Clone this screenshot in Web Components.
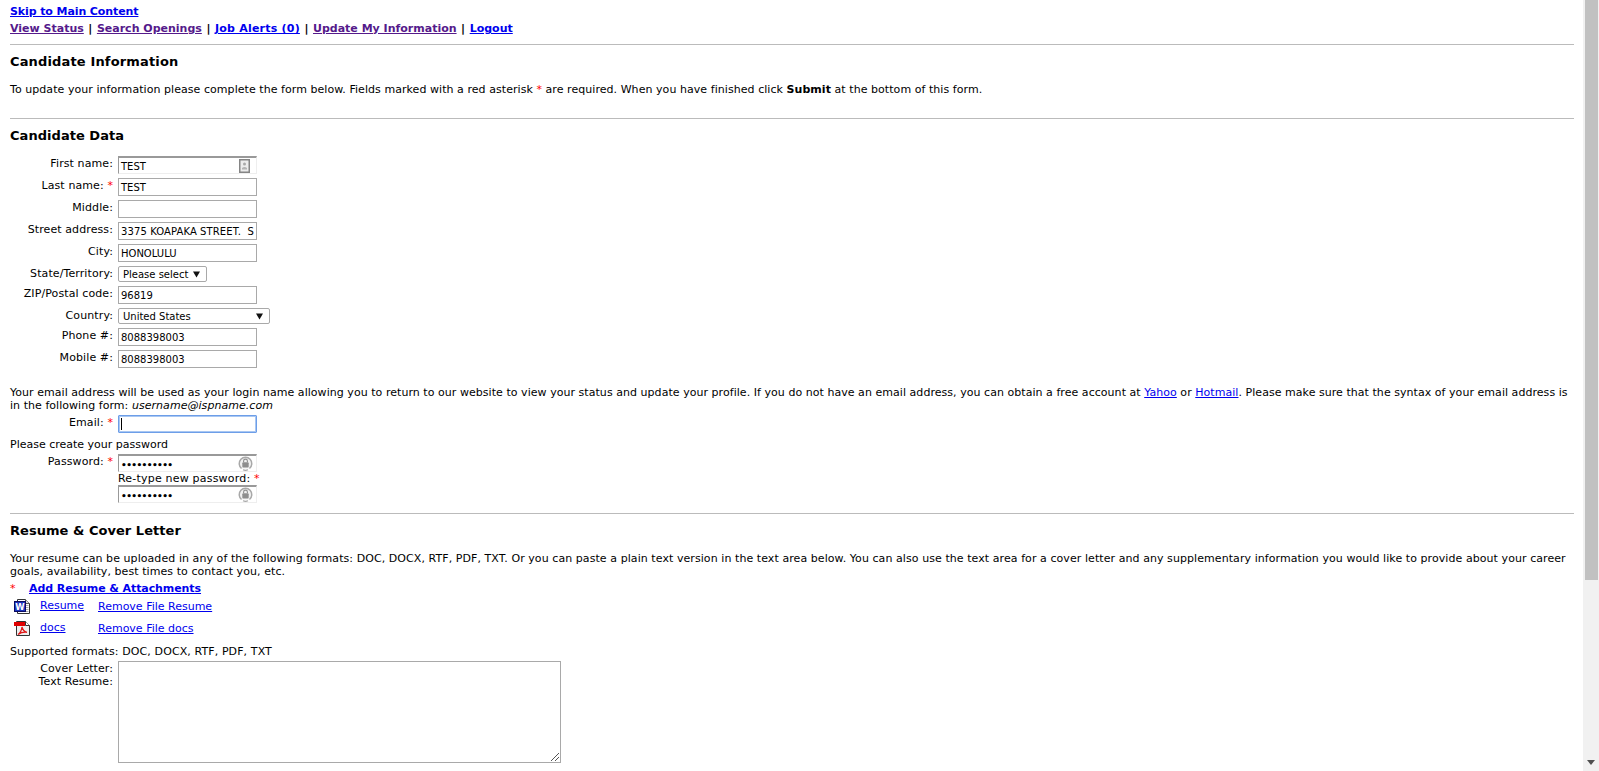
<!DOCTYPE html>
<html lang="en">
<head>
<meta charset="utf-8">
<title>Candidate Information</title>
<style>
  html, body { margin: 0; height: 100%; overflow: hidden; background: #fff; }
  body { font: 11px/13px "DejaVu Sans", Verdana, sans-serif; color: #000; letter-spacing: .07px; }
</style>
</head>
<body>
<cand-page>
  <cand-nav></cand-nav>

  <cand-section heading="Candidate Information" gap="14" space="8" track=".15">
    <cand-text track=".055">To update your information please complete the form below. Fields marked with a red asterisk <cand-req></cand-req> are required. When you have finished click <b>Submit</b> at the bottom of this form.</cand-text>
  </cand-section>

  <cand-section heading="Candidate Data" gap="13" space="22">
    <cand-row label="First name:" h="22"><cand-input value="TEST" kind="card"></cand-input></cand-row>
    <cand-row label="Last name:" required h="22"><cand-input value="TEST"></cand-input></cand-row>
    <cand-row label="Middle:" h="22"><cand-input></cand-input></cand-row>
    <cand-row label="Street address:" h="22"><cand-input value="3375 KOAPAKA STREET.  S" track=".1"></cand-input></cand-row>
    <cand-row label="City:" h="22"><cand-input value="HONOLULU"></cand-input></cand-row>
    <cand-row label="State/Territory:" h="20"><cand-select value="Please select" w="89"></cand-select></cand-row>
    <cand-row label="ZIP/Postal code:" h="22"><cand-input value="96819"></cand-input></cand-row>
    <cand-row label="Country:" h="20"><cand-select value="United States" w="152"></cand-select></cand-row>
    <cand-row label="Phone #:" h="22"><cand-input value="8088398003"></cand-input></cand-row>
    <cand-row label="Mobile #:" h="22"><cand-input value="8088398003"></cand-input></cand-row>

    <cand-text top="14" track=".045">Your email address will be used as your login name allowing you to return to our website to view your status and update your profile. If you do not have an email address, you can obtain a free account at <cand-link>Yahoo</cand-link> or <cand-link>Hotmail</cand-link>. Please make sure that the syntax of your email address is in the following form: <i>username@ispname.com</i></cand-text>
    <cand-row label="Email:" required h="22" top="3"><cand-input kind="focus"></cand-input></cand-row>
    <cand-text top="1" track="0">Please create your password</cand-text>
    <cand-row label="Password:" required h="22" top="3">
      <cand-input value="••••••••••" kind="key"></cand-input>
    </cand-row>
    <cand-row h="31">
      <div style="line-height:13px;margin-top:-4px;letter-spacing:.2px">Re-type new password: <cand-req></cand-req></div>
      <cand-input value="••••••••••" kind="key"></cand-input>
    </cand-row>
  </cand-section>

  <cand-section heading="Resume &amp; Cover Letter" gap="14" space="6">
    <cand-text>Your resume can be uploaded in any of the following formats: DOC, DOCX, RTF, PDF, TXT. Or you can paste a plain text version in the text area below. You can also use the text area for a cover letter and any supplementary information you would like to provide about your career goals, availability, best times to contact you, etc.</cand-text>
    <cand-add></cand-add>
    <cand-file name="Resume" type="word"></cand-file>
    <cand-file name="docs" type="pdf"></cand-file>
    <cand-text top="6" track=".1">Supported formats: DOC, DOCX, RTF, PDF, TXT</cand-text>
    <cand-letter></cand-letter>
  </cand-section>
</cand-page>

<script>
// small helper so every element gets an open shadow root from a string
function def(name, html, cls) {
  const C = cls || class extends HTMLElement {
    constructor() { super(); this.attachShadow({ mode: "open" }).innerHTML = html; }
  };
  customElements.define(name, C);
}

def("cand-page", `
  <style>
    :host { display: flex; height: 100vh; overflow: hidden; }
    main { flex: 1; min-width: 0; padding: 5px 9px 0 10px; height: 900px; }
    .bar { width: 16px; flex: none; background: #f1f1f1; position: relative; }
    .thumb { margin-left: 2px; width: 13px; height: 580px; background: #c1c1c1; }
    .down { position: absolute; left: 4px; bottom: 6px; width: 0; height: 0;
      border: 4px solid transparent; border-top: 5px solid #505050; border-bottom: 0; }
  </style>
  <main><slot></slot></main>
  <div class="bar"><div class="thumb"></div><div class="down"></div></div>
`);

const linkCss = `a { color: #00e; text-decoration: underline; cursor: pointer; } a.seen { color: #551a8b; }`;

class CandNav extends HTMLElement {
  constructor() {
    super();
    const items = [["View Status", "seen"], ["Search Openings", "seen"], ["Job Alerts (0)", "wide"], ["Update My Information", "seen"], ["Logout", ""]];
    this.attachShadow({ mode: "open" }).innerHTML = `
      <style>
        :host { display: block; font-weight: bold; line-height: 14px; letter-spacing: 0; }
        ${linkCss}
        .skip { letter-spacing: -.1px; }
        .wide { letter-spacing: .22px; }
        div { margin-top: 3px; }
        span { padding: 0 .7px; }
      </style>
      <a class="skip">Skip to Main Content</a>
      <div>${items.map(([t, cls]) => `<a class="${cls}">${t}</a>`).join(" <span>|</span> ")}</div>`;
  }
}
def("cand-nav", "", CandNav);

class CandSection extends HTMLElement {
  constructor() {
    super();
    this.attachShadow({ mode: "open" }).innerHTML = `
      <style>
        :host { display: block; }
        hr { border: 0; height: 1px; background: #bbb; margin: 0 0 9px; }
        h2 { font-size: 13px; line-height: 15px; margin: 0; font-weight: bold; letter-spacing: .04px; }
      </style>
      <hr><h2></h2><slot></slot>`;
    const h2 = this.shadowRoot.querySelector("h2");
    h2.textContent = this.getAttribute("heading");
    h2.style.marginBottom = this.getAttribute("gap") + "px";
    if (this.getAttribute("track")) h2.style.letterSpacing = this.getAttribute("track") + "px";
    this.shadowRoot.querySelector("hr").style.marginTop = (this.getAttribute("space") || 9) + "px";
  }
}
def("cand-section", "", CandSection);

class CandText extends HTMLElement {
  constructor() {
    super();
    this.attachShadow({ mode: "open" }).innerHTML = `<style>:host { display: block; }</style><slot></slot>`;
    this.style.marginTop = (this.getAttribute("top") || 0) + "px";
    if (this.getAttribute("track")) this.style.letterSpacing = this.getAttribute("track") + "px";
  }
}
def("cand-text", "", CandText);

def("cand-req", `<style>:host { color: #f00; }</style>*`);
def("cand-link", `<style>:host { color: #00e; text-decoration: underline; cursor: pointer; }</style><slot></slot>`);

class CandRow extends HTMLElement {
  constructor() {
    super();
    const label = this.getAttribute("label") || "";
    const req = this.hasAttribute("required");
    this.attachShadow({ mode: "open" }).innerHTML = `
      <style>
        :host { display: grid; grid-template-columns: 103px 1fr; column-gap: 5px; align-items: start; }
        .l { text-align: right; padding-top: 1px; white-space: pre; letter-spacing: .1px; }
        .r { color: #f00; }
        .c { min-width: 0; }
      </style>
      <div class="l">${label}${req ? ' <span class="r">*</span>' : ""}</div>
      <div class="c"><slot></slot></div>`;
    this.style.height = this.getAttribute("h") + "px";
    if (this.getAttribute("top")) this.style.marginTop = this.getAttribute("top") + "px";
  }
}
def("cand-row", "", CandRow);

const cardIcon = `<svg width="11" height="14" viewBox="0 0 11 14"><rect x=".75" y=".75" width="9.500" height="12.500" fill="#ececec" stroke="#858585" stroke-width="1.500"/><circle cx="5.500" cy="5" r="1.500" fill="#a8a8a8"/><path d="M3 10.500V9q2.500-2 5 0v1.500z" fill="#b4b4b4"/></svg>`;
const keyIcon = `<svg width="15" height="15" viewBox="0 0 15 15"><path d="M3.500 12.500A6.300 6.300 0 1 1 11.500 12.500" fill="#f0f0f0" stroke="#a8a8a8" stroke-width="1.500"/><path d="M5 13.800q2.500 1 5 0" fill="none" stroke="#a8a8a8" stroke-width="1.200"/><rect x="4.300" y="6.300" width="6.400" height="5.200" rx="1" fill="#8e8e8e"/><path d="M5.600 6.300V5a1.900 1.900 0 0 1 3.800 0v1.300" fill="none" stroke="#8e8e8e" stroke-width="1.100"/></svg>`;

class CandInput extends HTMLElement {
  constructor() {
    super();
    const kind = this.getAttribute("kind") || "";
    const v = this.getAttribute("value") || "";
    const inset = kind === "card" || kind === "key";
    this.attachShadow({ mode: "open" }).innerHTML = `
      <style>
        :host { display: block; width: 139px; height: 18px; box-sizing: border-box; position: relative;
          font-size: 10px; line-height: 14px; overflow: hidden; background: #fff; letter-spacing: 0; }
        .box { height: 100%; box-sizing: border-box; border: 1px solid #a9a9a9; padding: 2px 1px 0 2px; white-space: pre; overflow: hidden; }
        .inset { border-style: solid; border-width: 2px 1px 1px 1px; border-color: #999 #eee #eee #999; }
        .focus { border: 1px solid #6d9ee8; box-shadow: inset 0 0 0 1px #a9c7f2; border-radius: 1px; padding-top: 1px; }
        .caret { display: inline-block; width: 1px; height: 12px; background: #000; margin-top: 1px; }
        .dots { font-size: 9px; letter-spacing: -.6px; font-weight: bold; }
        .ico { position: absolute; right: 7px; top: 3px; display: flex; }
        .key { right: 4px; top: 2px; }
      </style>
      <div class="box ${inset ? "inset" : ""} ${kind === "focus" ? "focus" : ""}"><span class="${kind === "key" ? "dots" : ""}"></span>${kind === "focus" ? '<i class="caret"></i>' : ""}</div>
      ${kind === "card" ? `<div class="ico">${cardIcon}</div>` : ""}
      ${kind === "key" ? `<div class="ico key">${keyIcon}</div>` : ""}`;
    const span = this.shadowRoot.querySelector("span");
    span.textContent = v;
    if (this.getAttribute("track")) span.style.letterSpacing = this.getAttribute("track") + "px";
  }
}
def("cand-input", "", CandInput);

class CandSelect extends HTMLElement {
  constructor() {
    super();
    this.attachShadow({ mode: "open" }).innerHTML = `
      <style>
        :host { display: flex; align-items: center; justify-content: space-between; box-sizing: border-box; height: 16px;
          border: 1px solid #a9a9a9; border-radius: 2px; padding: 0 6px 0 4px; font-size: 10px; background: #fff; letter-spacing: 0; }
        svg { display: block; }
      </style>
      <span></span>
      <svg width="7" height="7" viewBox="0 0 7 7"><path d="M0 .5h7L3.500 6.500z" fill="#111"/></svg>`;
    this.shadowRoot.querySelector("span").textContent = this.getAttribute("value");
    this.style.width = this.getAttribute("w") + "px";
  }
}
def("cand-select", "", CandSelect);

def("cand-add", `
  <style>
    :host { display: flex; font-weight: bold; margin-top: 4px; letter-spacing: -.08px; }
    ${linkCss}
    .r { color: #f00; font-weight: normal; width: 19px; }
  </style>
  <span class="r">*</span><a>Add Resume &amp; Attachments</a>`);

const wordIcon = `<svg width="16" height="15" viewBox="0 0 16 15"><path d="M3.500.5h8l4 4v10h-12z" fill="#fff" stroke="#333"/><path d="M11.500.5v4h4" fill="#ddd" stroke="#555"/><path d="M12 6.500h2.500M12 8.500h2.500M12 10.500h2.500M5 12.500h9.500" stroke="#aaa"/><rect x=".5" y="2.500" width="11" height="10" fill="#1c35c0" stroke="#0a0a60"/><text x="6" y="10.800" font-family="DejaVu Sans" font-size="8.500" font-weight="bold" letter-spacing="0" text-anchor="middle" fill="#fff">W</text></svg>`;
const pdfIcon = `<svg width="16" height="15" viewBox="0 0 16 15"><path d="M2.500.5h9l4 4v10h-13z" fill="#efefef" stroke="#333"/><path d="M11.500.5v4h4" fill="#fff" stroke="#333"/><rect x="0" y="1" width="11" height="4" fill="#e00000"/><path d="M4 13.500c2.500-1.800 3.700-4.500 4-7.500 .6 2.800 2.300 4.700 5 5.300-3.200-.4-6.200.3-9 2.200z" fill="none" stroke="#e01818" stroke-width="1.300"/></svg>`;

class CandFile extends HTMLElement {
  constructor() {
    super();
    const name = this.getAttribute("name");
    this.attachShadow({ mode: "open" }).innerHTML = `
      <style>
        :host { display: grid; grid-template-columns: 30px 58px 1fr; height: 22px; align-items: center; letter-spacing: 0; }
        ${linkCss}
        .ico { padding-left: 4px; display: flex; }
        .n { margin-top: -1px; }
      </style>
      <div class="ico">${this.getAttribute("type") === "word" ? wordIcon : pdfIcon}</div>
      <a class="n">${name}</a><a>Remove File ${name}</a>`;
  }
}
def("cand-file", "", CandFile);

def("cand-letter", `
  <style>
    :host { display: grid; grid-template-columns: 103px 1fr; column-gap: 5px; margin-top: 3px; }
    .l { text-align: right; line-height: 13px; padding-top: 1px; }
    .area { width: 443px; height: 102px; box-sizing: border-box; border: 1px solid #a9a9a9; position: relative; background: #fff; }
    svg { position: absolute; right: 1px; bottom: 1px; }
  </style>
  <div class="l">Cover Letter:<br>Text Resume:</div>
  <div class="area"><svg width="10" height="10" viewBox="0 0 10 10"><path d="M2 10 10 2M6 10l4-4" stroke="#555" fill="none"/></svg></div>`);
</script>
</body>
</html>
